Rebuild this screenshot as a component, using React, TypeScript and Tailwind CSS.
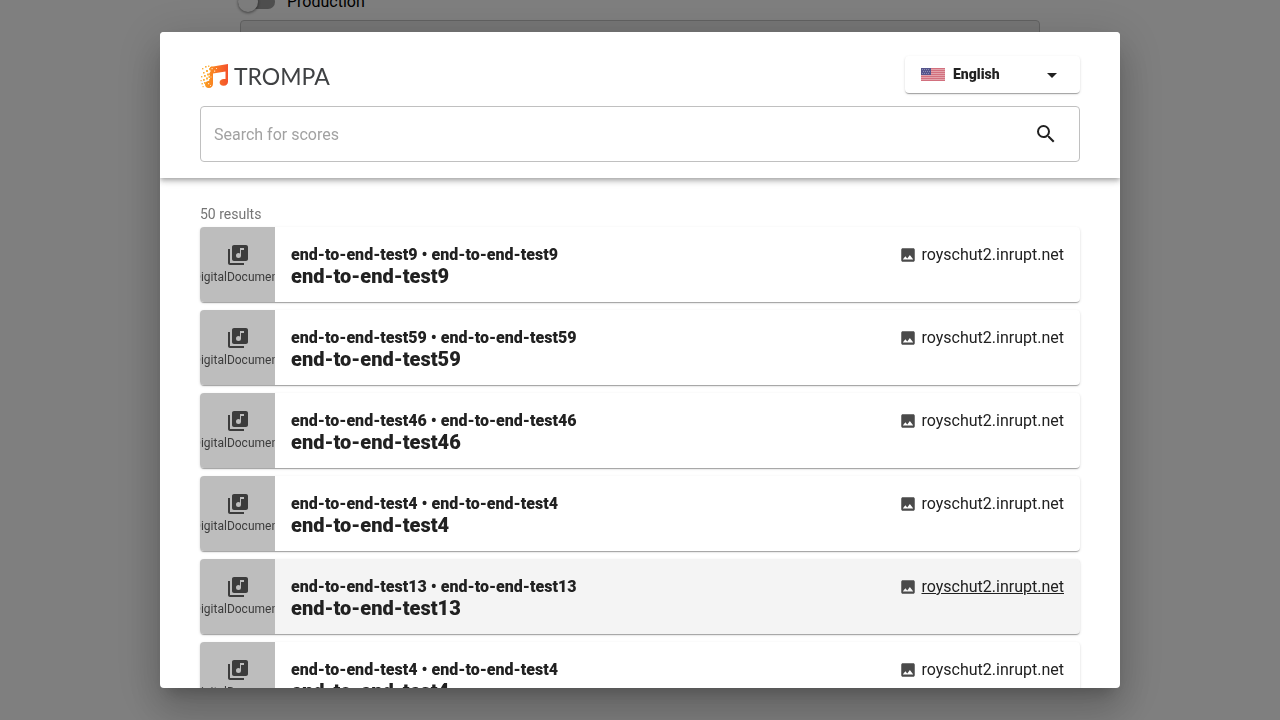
import { useState } from 'react';
import { MdArrowDropDown, MdImage, MdLibraryMusic, MdSearch } from 'react-icons/md';

const results = [
  { id: 1, name: 'end-to-end-test9' },
  { id: 2, name: 'end-to-end-test59' },
  { id: 3, name: 'end-to-end-test46' },
  { id: 4, name: 'end-to-end-test4' },
  { id: 5, name: 'end-to-end-test13', active: true },
  { id: 6, name: 'end-to-end-test4' },
];

const cardShadow =
  'shadow-[0_2px_1px_-1px_rgba(0,0,0,0.2),0_1px_1px_0_rgba(0,0,0,0.14),0_1px_3px_0_rgba(0,0,0,0.12)]';

// Fragments that scatter off the left side of the note: x, y, size
const fragments = [
  [2, 5, 1.4], [5, 3, 1.6], [8, 2.5, 1.4], [3, 9, 1.6], [6, 7, 2], [9, 5, 2.2],
  [1, 13, 1.4], [4, 12, 1.8], [7, 10.5, 2], [10, 9, 1.8], [0.5, 17, 1.2],
  [3, 16, 1.8], [6, 14.5, 2], [8.5, 13, 2], [1.5, 20, 1.4], [4, 19, 1.8],
  [9, 16, 2.2], [2.5, 23, 1.2], [11, 3.5, 1.6], [11, 12, 1.6],
];

function Logo() {
  return (
    <a href="#home" aria-label="Trompa" className="flex items-center gap-1.5 pt-1 text-[#3f4143]">
      <svg width="28" height="26" viewBox="0 0 28 26" aria-hidden="true">
        <defs>
          <linearGradient id="note" x1="0" y1="0" x2="1" y2="0">
            <stop offset="0" stopColor="#fb9a1f" />
            <stop offset="0.45" stopColor="#f97b24" />
            <stop offset="1" stopColor="#f4512c" />
          </linearGradient>
        </defs>
        <g fill="#fbb040">
          {fragments.map(([x, y, s], i) => (
            <rect key={i} x={x} y={y} width={s} height={s} />
          ))}
        </g>
        <path
          fill="url(#note)"
          d="M10 4 28 1V18.5C28 21 26.5 22.8 23.5 22.8 21 22.8 19.6 21.4 19.6 19.5 19.6 17.3 21.5 16 23.8 16H25.5V8.5L13 10.5V20.5C13 23.4 11.5 25 8.8 25 6.4 25 5 23.4 5 21.5 5 19.3 7 17.8 10 17.8V13L9 11 10.5 8.5Z"
        />
        <path
          fill="#fff"
          fillOpacity="0.75"
          d="M11.5 5h1.2v1.2h-1.2zM14 7.5h1.2v1.2H14zM8 20h1.2v1.2H8zM16 5h1v1h-1zM10.5 13.5h1v1h-1zM10 22h1v1h-1z"
        />
      </svg>
      <span className="font-['Lato',sans-serif] text-[23px] leading-8">TROMPA</span>
    </a>
  );
}

function Flag() {
  return (
    <svg width="24" height="13" viewBox="0 0 24 13" aria-hidden="true" className="shrink-0">
      <rect width="24" height="13" fill="#e3a3ab" />
      {[0, 2, 4, 6, 8, 10, 12].map((y) => (
        <rect key={y} y={y} width="24" height="1" fill="#d2707e" />
      ))}
      <rect width="10" height="7" fill="#55558c" />
      <g fill="#8c8cb4">
        {[1, 3, 5].map((y) =>
          [1, 3, 5, 7].map((x) => <rect key={`${x}-${y}`} x={x + (y === 3 ? 1 : 0)} y={y} width="1" height="1" />),
        )}
      </g>
    </svg>
  );
}

function LanguageSelect() {
  return (
    <div className={`relative flex w-[175px] items-center rounded bg-white ${cardShadow}`}>
      <div className="pointer-events-none absolute left-4">
        <Flag />
      </div>
      <select
        aria-label="Language"
        className="h-[37px] w-full appearance-none rounded bg-transparent pr-10 pb-0.5 pl-12 text-sm font-black outline-none"
      >
        <option>English</option>
      </select>
      <MdArrowDropDown className="pointer-events-none absolute right-4 size-6" />
    </div>
  );
}

function ResultCard({ name, active }: { name: string; active?: boolean }) {
  return (
    <li className={`flex h-[75px] overflow-hidden rounded ${cardShadow} ${active ? 'bg-[#f4f4f4]' : 'bg-white'}`}>
      <div className="flex w-[75px] shrink-0 flex-col items-center justify-center overflow-hidden bg-[#bdbdbd] text-[#3c3c3c]">
        <MdLibraryMusic className="size-6" />
        <span className="text-xs leading-5 whitespace-nowrap">DigitalDocument</span>
      </div>
      <div className="flex min-w-0 flex-1 items-start justify-between px-4 pt-[17px]">
        <div className="min-w-0 font-black">
          <p className="text-base leading-[22px]">
            {name} • {name}
          </p>
          <h2 className="text-xl leading-5">{name}</h2>
        </div>
        <a href="#source" className="flex shrink-0 items-center gap-1 leading-[22px]">
          <MdImage className="size-[18px] text-[#4a4a4a]" />
          <span className={active ? 'underline' : ''}>royschut2.inrupt.net</span>
        </a>
      </div>
    </li>
  );
}

export default function App() {
  const [query, setQuery] = useState('');
  return (
    <div className="h-screen overflow-hidden bg-white font-['Roboto',sans-serif] text-base text-[#212121]">
      <main className="mx-auto -mt-2.5 max-w-[800px]">
        <label className="flex h-6 items-center text-black">
          <input type="checkbox" className="peer sr-only" />
          <span className="-ml-0.5 flex h-3.5 w-[37px] items-center rounded-full bg-[#9e9e9e]">
            <span className="size-5 shrink-0 rounded-full bg-[#fafafa] shadow-[0_1px_3px_rgba(0,0,0,0.5)]" />
          </span>
          <span className="pl-3">Production</span>
        </label>
        <div className="mt-1.5 h-[640px] rounded border border-[#c4c4c4] bg-[#ececec]" />
      </main>

      <div className="fixed inset-0 flex justify-center bg-black/50 p-8">
        <div
          role="dialog"
          aria-label="Search for scores"
          className="flex w-full max-w-[960px] flex-col overflow-hidden rounded bg-white shadow-[0_11px_15px_-7px_rgba(0,0,0,0.2),0_24px_38px_3px_rgba(0,0,0,0.14),0_9px_46px_8px_rgba(0,0,0,0.12)]"
        >
          <header className="z-10 shrink-0 bg-white px-10 pt-6 pb-4 shadow-[0_2px_4px_-1px_rgba(0,0,0,0.2),0_4px_5px_0_rgba(0,0,0,0.14),0_1px_10px_0_rgba(0,0,0,0.12)]">
            <div className="flex items-start justify-between">
              <Logo />
              <LanguageSelect />
            </div>
            <form className="mt-[13px] flex h-14 items-center rounded border border-[#c0c0c0] pr-[21px] pl-[13px]">
              <input
                type="search"
                aria-label="Search for scores"
                placeholder="Search for scores"
                value={query}
                onChange={(e) => setQuery(e.target.value)}
                className="h-full min-w-0 flex-1 bg-transparent outline-none placeholder:text-[#a2a2a2]"
              />
              <button type="button" aria-label="Search">
                <MdSearch className="size-6" />
              </button>
            </form>
          </header>
          <section className="min-h-0 flex-1 overflow-hidden px-10 pt-[26px]">
            <p className="pb-[3px] text-sm leading-5 text-[#757575]">50 results</p>
            <ul className="flex flex-col gap-2">
              {results.map((r) => (
                <ResultCard key={r.id} name={r.name} active={r.active} />
              ))}
            </ul>
          </section>
        </div>
      </div>
    </div>
  );
}
